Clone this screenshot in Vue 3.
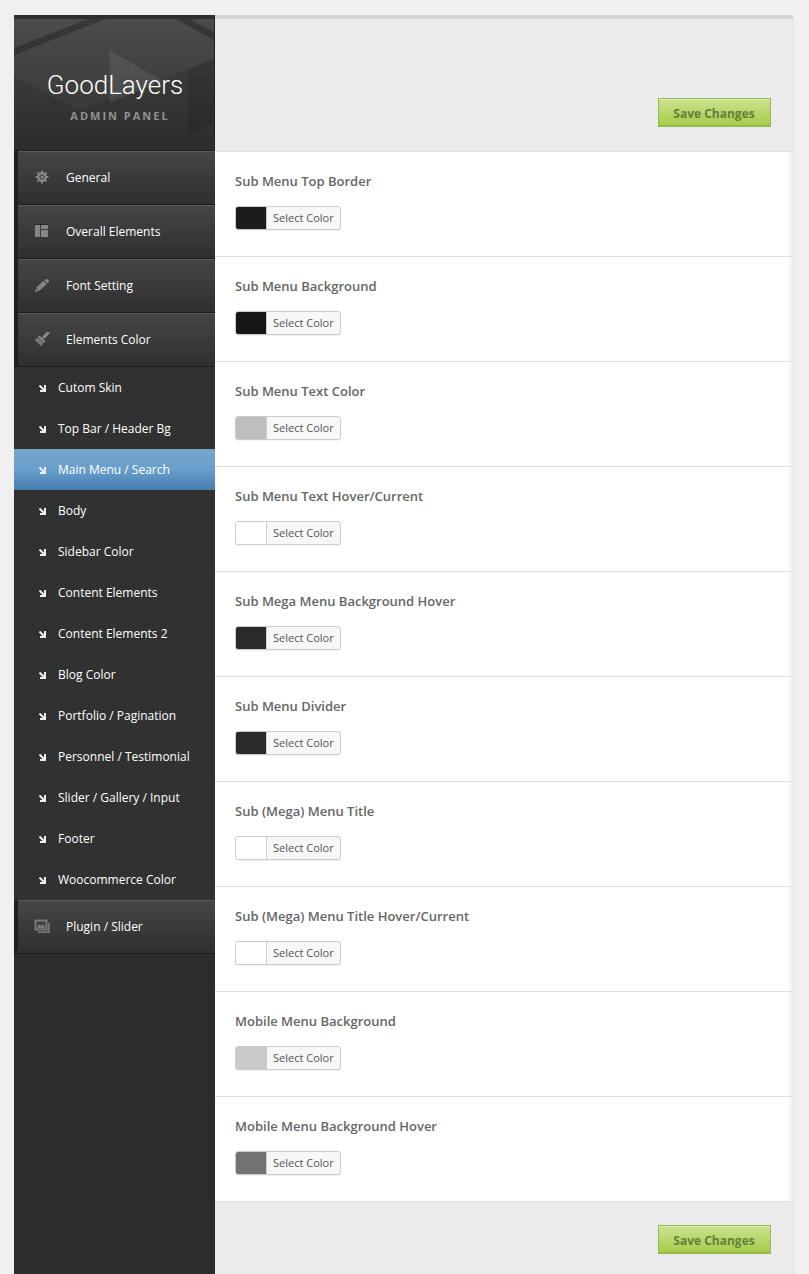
<script setup>
import { ref } from 'vue'

const subItems = [
  'Cutom Skin', 'Top Bar / Header Bg', 'Main Menu / Search', 'Body', 'Sidebar Color',
  'Content Elements', 'Content Elements 2', 'Blog Color', 'Portfolio / Pagination',
  'Personnel / Testimonial', 'Slider / Gallery / Input', 'Footer', 'Woocommerce Color',
]

const menu = [
  { label: 'General', icon: 'gear' },
  { label: 'Overall Elements', icon: 'layout' },
  { label: 'Font Setting', icon: 'pencil' },
  { label: 'Elements Color', icon: 'brush', children: subItems },
  { label: 'Plugin / Slider', icon: 'slides' },
]

const current = ref('Main Menu / Search')

const options = [
  { label: 'Sub Menu Top Border', color: '#1c1c1c' },
  { label: 'Sub Menu Background', color: '#161616' },
  { label: 'Sub Menu Text Color', color: '#bebebe' },
  { label: 'Sub Menu Text Hover/Current', color: '#ffffff' },
  { label: 'Sub Mega Menu Background Hover', color: '#2a2a2a' },
  { label: 'Sub Menu Divider', color: '#2a2a2a' },
  { label: 'Sub (Mega) Menu Title', color: '#ffffff' },
  { label: 'Sub (Mega) Menu Title Hover/Current', color: '#ffffff' },
  { label: 'Mobile Menu Background', color: '#cacaca' },
  { label: 'Mobile Menu Background Hover', color: '#727272' },
]
</script>

<template>
  <div class="page">
    <form class="panel" @submit.prevent>
      <aside class="sidebar">
        <header class="brand">
          <svg class="brand-art" viewBox="0 0 199 131" preserveAspectRatio="none" aria-hidden="true">
            <path d="M0 29 74 0h17L0 36z" fill="#000" opacity=".25" />
            <path d="M161 0h14l24 13v8z" fill="#000" opacity=".25" />
            <path d="M0 58 65 91 199 40V131H0z" fill="#000" opacity=".1" />
            <path d="M95 31 148 62 95 84z" fill="#fff" opacity=".08" />
            <path d="M173 51 199 40V105L173 114z" fill="#000" opacity=".1" />
          </svg>
          <h1>GoodLayers</h1>
          <p>ADMIN PANEL</p>
        </header>
        <nav>
          <ul class="menu">
            <li v-for="item in menu" :key="item.label">
              <a class="item" href="#">
                <svg class="icon" viewBox="0 0 16 16" aria-hidden="true">
                  <template v-if="item.icon === 'gear'">
                    <g stroke="#858585" stroke-width="2">
                      <path d="M8 .5v13M1.500 7h13M3.500 2.500l9 9M12.500 2.500l-9 9" />
                    </g>
                    <circle cx="8" cy="7" r="4.800" fill="#8a8a8a" />
                    <circle cx="8" cy="7" r="2.300" fill="#686868" stroke="#484848" />
                    <circle cx="8" cy="7" r=".8" fill="#a5a5a5" />
                  </template>
                  <template v-else-if="item.icon === 'layout'">
                    <path d="M1 1h5v12H1zM7 1h7v4H7zM7 6h7v7H7z" fill="#868686" />
                    <path d="M0 .5h14" stroke="#292929" />
                  </template>
                  <template v-else-if="item.icon === 'pencil'">
                    <path d="m1 14 1.500-4.500 7-6.500 3 3-7 6.500zM10.500 2.200 12 1q1 0 2 .8t1 2l-1.500 1.400z" fill="#8e8e8e" />
                    <path d="m5 10 5-4.600" stroke="#666" />
                    <path d="m2.500 10 2.500 2.500" stroke="#3e3e3e" />
                  </template>
                  <template v-else-if="item.icon === 'brush'">
                    <g transform="translate(0 -1)">
                      <path d="m10 6 4-4" stroke="#8c8c8c" stroke-width="3" stroke-linecap="round" />
                      <path d="m5.500 4.500 6 6-1.700 1-5.600-5.500z" fill="#929292" />
                      <path d="m4 6.500 5.500 5.500-2.500 3L.5 8.700z" fill="#7d7d7d" />
                      <path d="m3 9 1.500-1M5 11l1.500-1M7 13l1-1" stroke="#5c5c5c" />
                    </g>
                  </template>
                  <template v-else>
                    <path d="M4 13h11V4" fill="none" stroke="#6e6e6e" stroke-width="2" />
                    <rect x="1.500" y="1.500" width="11" height="9" fill="#414141" stroke="#7a7a7a" stroke-width="2" />
                    <path d="m3 9 2-4 2 2 2-2 2 4z" fill="#7a7a7a" />
                  </template>
                </svg>
                <span>{{ item.label }}</span>
              </a>
              <ul v-if="item.children" class="submenu">
                <li v-for="child in item.children" :key="child">
                  <a
                    class="subitem"
                    :class="{ active: child === current }"
                    href="#"
                    @click.prevent="current = child"
                  >
                    <svg class="arrow" viewBox="0 0 8 8" aria-hidden="true">
                      <path d="m.5 .5 5 5" stroke="#eee" stroke-width="2" />
                      <path d="M6 0v6H1" fill="none" stroke="#eee" stroke-width="2" />
                    </svg>
                    <span>{{ child }}</span>
                  </a>
                </li>
              </ul>
            </li>
          </ul>
        </nav>
      </aside>

      <main class="content">
        <div class="bar top">
          <button class="save" type="submit">Save Changes</button>
        </div>
        <div class="options">
          <section v-for="(option, i) in options" :key="option.label" class="option">
            <h2 :id="`option-${i}`">{{ option.label }}</h2>
            <button class="picker" type="button" :aria-describedby="`option-${i}`">
              <span class="swatch" :style="{ background: option.color }"></span>
              <span class="picker-text">Select Color</span>
            </button>
          </section>
        </div>
        <div class="bar bottom">
          <button class="save" type="submit">Save Changes</button>
        </div>
      </main>
    </form>
  </div>
</template>

<style>
body {
  margin: 0;
  background: #f0f0f0;
}
</style>

<style scoped>
.page {
  box-sizing: border-box;
  min-height: 100vh;
  padding: 15px 15px 0 14px;
  display: flex;
  font-family: "Open Sans", "Liberation Sans", sans-serif;
}
.panel {
  flex: 1;
  display: flex;
  min-width: 0;
}
ul {
  list-style: none;
  margin: 0;
  padding: 0;
}
a {
  text-decoration: none;
  color: #fff;
}
.sidebar {
  flex: 0 0 201px;
  background: #2c2c2c;
}
.brand {
  position: relative;
  box-sizing: border-box;
  height: 136px;
  padding-top: 50px;
  border-top: 4px solid #2d2f2e;
  border-right: 1px solid #232323;
  border-bottom: 1px solid #202020;
  text-align: center;
  background:
    linear-gradient(135deg, #00000017 25%, transparent 25%, transparent 50%, #00000017 50%, #00000017 75%, transparent 75%) 0 0 / 4px 4px,
    linear-gradient(#4f4f4f, #343434);
}
.brand-art {
  position: absolute;
  inset: 0;
  width: 100%;
  height: 100%;
}
.brand h1 {
  position: relative;
  margin: 0 0 0 2px;
  font: 300 26px/32px Roboto, sans-serif;
  color: #fff;
}
.brand p {
  position: relative;
  margin: 7px 0 0 12px;
  font-size: 11px;
  line-height: 16px;
  font-weight: 700;
  letter-spacing: 2px;
  color: #929292;
}
.item {
  box-sizing: border-box;
  height: 54px;
  display: flex;
  align-items: center;
  gap: 16px;
  padding-left: 16px;
  border-left: 4px solid #202020;
  background: linear-gradient(#464646, #2e2e2e);
  box-shadow: inset 0 1px #5a5a5a, inset 0 -1px #1b1b1b;
  font-size: 12px;
  line-height: 18px;
}
.icon {
  width: 16px;
  height: 16px;
}
.submenu {
  background:
    linear-gradient(135deg, #2d2d2d 25%, transparent 25%, transparent 50%, #2d2d2d 50%, #2d2d2d 75%, transparent 75%) 0 0 / 4px 4px,
    #353535;
}
.subitem {
  display: flex;
  align-items: center;
  gap: 11px;
  height: 41px;
  padding-left: 25px;
  font-size: 12px;
  line-height: 18px;
}
.subitem.active {
  background:
    linear-gradient(135deg, #0000000a 25%, transparent 25%, transparent 50%, #0000000a 50%, #0000000a 75%, transparent 75%) 0 0 / 4px 4px,
    linear-gradient(#78a8d0, #6ba2d0 50%, #4680b2);
}
.arrow {
  width: 8px;
  height: 8px;
  padding-top: 2px;
}
.content {
  flex: 1;
  min-width: 0;
  display: flex;
  flex-direction: column;
  border-right: 1px solid #e3e3e3;
}
.bar {
  box-sizing: border-box;
  display: flex;
  justify-content: flex-end;
  padding-right: 22px;
  background:
    linear-gradient(135deg, #e6e6e6 25%, transparent 25%, transparent 50%, #e6e6e6 50%, #e6e6e6 75%, transparent 75%) 0 0 / 4px 4px,
    #f0f0f0;
}
.bar.top {
  height: 137px;
  align-items: flex-end;
  padding-bottom: 24px;
  border-top: 4px solid #d6d6d6;
  border-bottom: 1px solid #e1e1e1;
}
.bar.bottom {
  flex: 1;
  align-items: flex-start;
  padding-top: 23px;
  padding-bottom: 20px;
}
.save {
  padding: 2px 15px 0 14px;
  height: 29px;
  min-width: 113px;
  border: 1px solid #96b956;
  background: linear-gradient(#cce28f, #a3cc48);
  box-shadow: inset 0 1px #dcebb0, inset 0 -1px #93bb3d;
  font: 700 12px/18px "Open Sans", sans-serif;
  color: #64803a;
}
.options {
  background: #f4f4f4;
}
.option {
  box-sizing: border-box;
  height: 105px;
  padding: 20px 20px 0;
  border-bottom: 1px solid #e1e1e1;
  background: linear-gradient(#fff, #fff) 0 0 / calc(100% - 4px) 100% no-repeat;
}
.option h2 {
  margin: 0 0 15px;
  font-size: 13px;
  line-height: 19px;
  font-weight: 600;
  color: #666;
}
.picker {
  display: flex;
  height: 24px;
  padding: 0;
  border: 1px solid #ccc;
  border-radius: 3px;
  overflow: hidden;
  background: #f7f7f7;
  box-shadow: 0 1px #0000000d;
  font: 400 11px/22px "Open Sans", sans-serif;
  color: #555;
}
.swatch {
  width: 30px;
  height: 22px;
}
.picker-text {
  padding: 0 6px;
  border-left: 1px solid #ccc;
}
</style>
